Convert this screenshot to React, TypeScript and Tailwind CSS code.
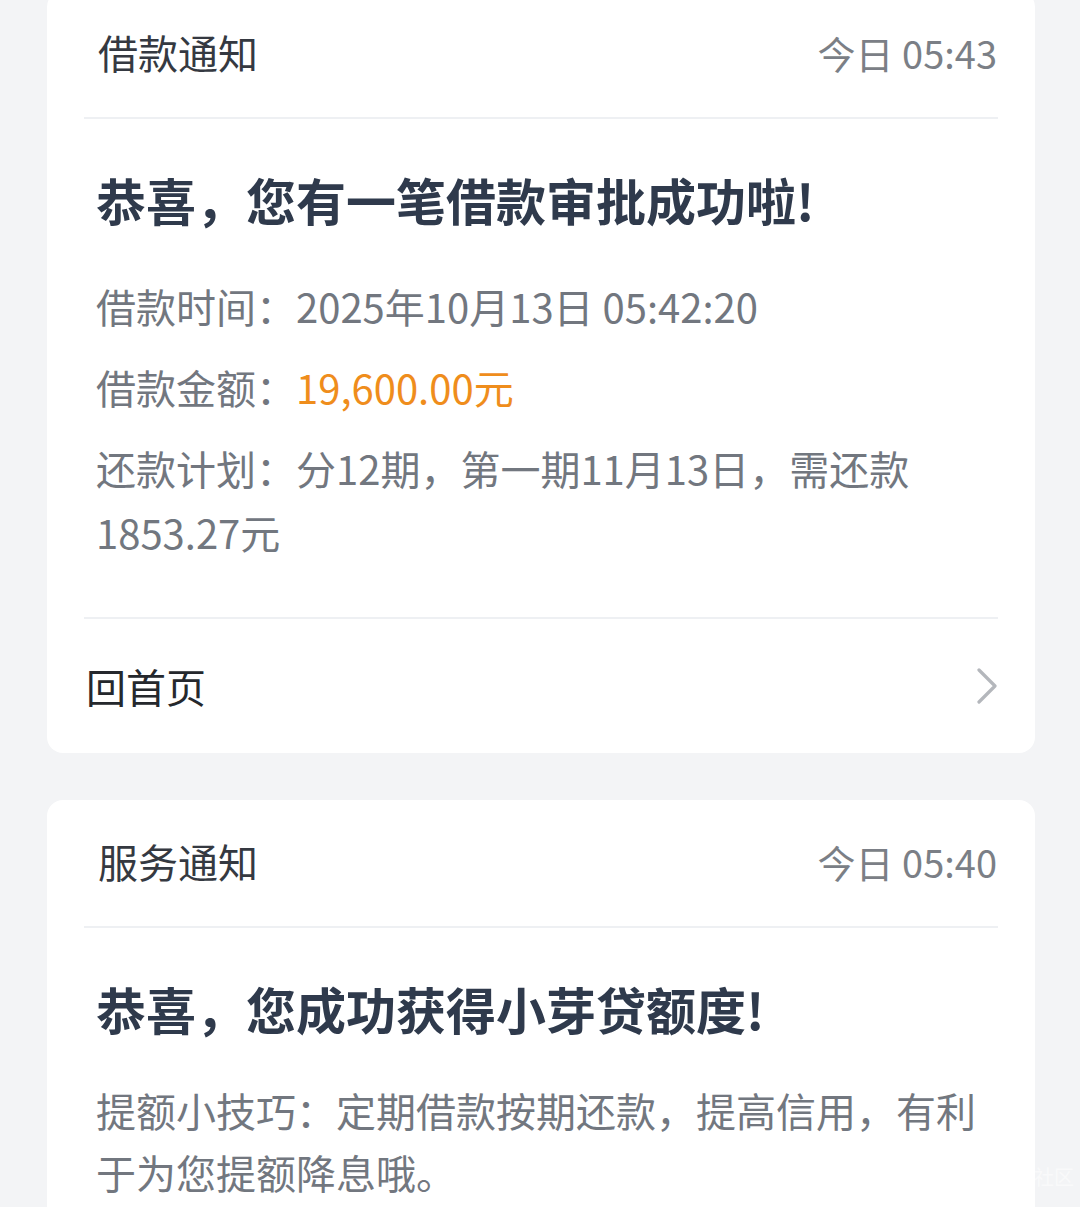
import React from "react";

const font = "font-['Noto_Sans_CJK_SC','Noto_Sans',sans-serif]";

const Divider: React.FC = () => <div className="h-[2px] bg-[#eef0f3]" />;

const CardHeader: React.FC<{ title: string; time: string }> = ({ title, time }) => (
  <div className="flex h-[126px] items-center justify-between pb-[4px] pl-[14px] pr-[1px]">
    <span className="text-[40px] text-[#353941]">{title}</span>
    <span className="text-[38px] text-[#7b7f86]">{time}</span>
  </div>
);

const App: React.FC = () => {
  return (
    <div className={`relative min-h-[1207px] overflow-hidden bg-[#f3f4f6] ${font}`}>
      {/* Loan notice */}
      <div className="ml-[47px] mr-[45px] -mt-[9px] rounded-[16px] bg-white px-[37px]">
        <CardHeader title="借款通知" time="今日 05:43" />
        <Divider />
        <div className="pl-[12px] pt-[45px] pb-[53px]">
          <h2 className="text-[50px] font-bold leading-[70px] text-[#2f3a4c]">
            恭喜，您有一笔借款审批成功啦!
          </h2>
          <div className="mt-[40px] flex flex-col gap-[17px] text-[40px] leading-[64px] text-[#72777f]">
            <p>借款时间：2025年10月13日 05:42:20</p>
            <p>
              借款金额：<span className="text-[#ef8d1c]">19,600.00元</span>
            </p>
            <p>还款计划：分12期，第一期11月13日，需还款 1853.27元</p>
          </div>
        </div>
        <Divider />
        <div className="flex h-[134px] items-center justify-between pl-[2px]">
          <span className="text-[40px] text-[#25282d]">回首页</span>
          <svg width="24" height="36" viewBox="0 0 24 36" fill="none" className="mr-[-1px]">
            <path d="M4 2 L20 18 L4 34" stroke="#b4b7bc" strokeWidth="3.2" strokeLinecap="round" strokeLinejoin="round" />
          </svg>
        </div>
      </div>

      {/* Service notice */}
      <div className="ml-[47px] mr-[45px] mt-[47px] rounded-[16px] bg-white px-[37px]">
        <CardHeader title="服务通知" time="今日 05:40" />
        <Divider />
        <div className="pl-[12px] pt-[45px] pb-[60px]">
          <h2 className="text-[50px] font-bold leading-[70px] text-[#2f3a4c]">
            恭喜，您成功获得小芽贷额度!
          </h2>
          <p className="mt-[36px] text-[40px] leading-[62px] text-[#72777f]">
            提额小技巧：定期借款按期还款，提高信用，有利于为您提额降息哦。
          </p>
        </div>
      </div>

      {/* faint watermark */}
      <span className="absolute left-[1034px] top-[1162px] text-[20px] text-white/50">社区</span>
    </div>
  );
};

export default App;
